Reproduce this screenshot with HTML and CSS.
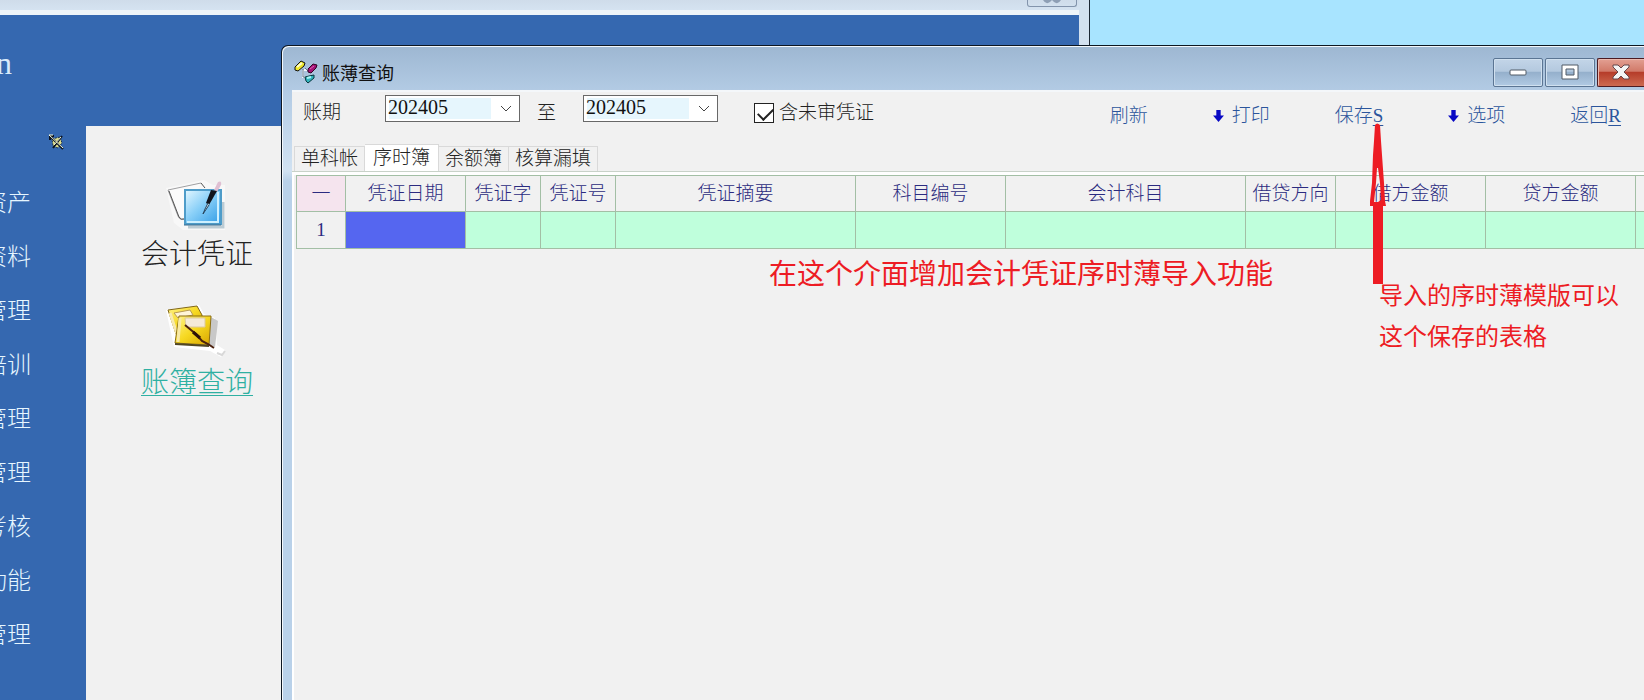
FILE: index.html
```html
<!DOCTYPE html>
<html lang="zh-CN">
<head>
  <meta charset="UTF-8">
  <meta name="viewport" content="width=device-width, initial-scale=1.0">
  <title>账薄查询</title>
  <link rel="stylesheet" href="styles.css">
</head>
<body>
  <div class="desktop">

    <!-- main window -->
    <div class="window main-window">
      <div class="main-title">
        <button class="main-ctl" aria-label="关闭">
          <svg width="20" height="5" viewBox="0 0 20 5"><path d="M1 0Q4 5 8 2L10 0L12 2Q16 5 19 0" fill="#8e9fb5"/></svg>
        </button>
      </div>
      <div class="main-body">
        <header class="banner"><span class="brand">n</span></header>
        <div class="main-content">
          <nav class="side-nav">
            <svg class="pin" width="15" height="15" viewBox="0 0 15 15">
              <path d="M3 4L11 2L13 8L9 13L4 11Z" fill="#dfe08c" stroke="#182c4c" stroke-dasharray="2 1"/>
              <path d="M1 1L14 14M1 1h4M1 1v4M13 1L4 13" stroke="#0c1420" fill="none" stroke-width="2"/>
              <path d="M0 0L14 13M0 0h4M12 2L5 10" stroke="#f4f8d8" fill="none"/>
            </svg>
            <a href="#">资产</a>
            <a href="#">资料</a>
            <a href="#">管理</a>
            <a href="#">培训</a>
            <a href="#">管理</a>
            <a href="#">管理</a>
            <a href="#">考核</a>
            <a href="#">功能</a>
            <a href="#">管理</a>
          </nav>
          <div class="launcher">
            <a href="#" class="launch">
              <svg width="62" height="54" viewBox="0 0 62 54">
                <defs>
                  <linearGradient id="blue" x1="0" y1="0" x2="1" y2="1">
                    <stop offset="0" stop-color="#e4f7ff"/><stop offset=".45" stop-color="#8ad0f8"/><stop offset="1" stop-color="#2f9be6"/>
                  </linearGradient>
                </defs>
                <path d="M0 8L38 0L47 5H59V50H17L8 43Z" fill="#f8f8f8"/>
                <path d="M35 3L2 10L12 36Q14 41 18 39" fill="#fbfbfb" stroke="#a0a0a2"/>
                <path d="M3 11L13 37Q15 40 18 39M35 3L39 8" fill="none" stroke="#555"/>
                <path d="M22 47H57V22" fill="none" stroke="#bccbd3" stroke-width="3"/>
                <rect x="19" y="10" width="36" height="34" fill="url(#blue)" stroke="#4e9cc9" stroke-width="2"/>
                <path d="M21 42H52V12" fill="none" stroke="#cdf0ff" stroke-width="2"/>
                <path d="M18 45H55" stroke="#3a6c8e"/>
                <path d="M48 10L52 2Q56 0 55 5L51 12Z" fill="#dfbfd2"/>
                <path d="M45 10L51 11L43 25L40 23Z" fill="#10141c"/>
                <path d="M42 23L39 29L37 34L43 25" fill="#d8eaf4" stroke="#24435c"/>
              </svg>
              <span>会计凭证</span>
            </a>
            <a href="#" class="launch active">
              <svg width="62" height="54" viewBox="0 3 62 54">
                <defs>
                  <linearGradient id="gold" x1="0" y1="0" x2="1" y2="1">
                    <stop offset="0" stop-color="#fff38b"/><stop offset=".5" stop-color="#f6d820"/><stop offset="1" stop-color="#d8a400"/>
                  </linearGradient>
                </defs>
                <path d="M0 5L33 0L38 9L49 13L51 40L59 45L55 52L44 46L8 42Z" fill="#fff"/>
                <path d="M45 12L52 16L49 42L43 40" fill="#c8c8c8"/>
                <path d="M2 5L31 1L36 10L37 28L10 29Z" fill="url(#gold)" stroke="#806518"/>
                <path d="M8 8L24 5L27 10L12 13Z" fill="#fff5d7" stroke="#b79a54"/>
                <path d="M4 8L11 29" stroke="#f7eab0" stroke-width="3"/>
                <path d="M13 11L45 11L43 40L9 38Z" fill="url(#gold)" stroke="#8b6d13"/>
                <path d="M14 13L12 37" stroke="#f8e9a6" stroke-width="3"/>
                <path d="M19 13H39V22H20Z" fill="#f5ead8" stroke="#ddc99c"/>
                <path d="M9 39L43 41" stroke="#504623" stroke-width="2"/>
                <path d="M19 20L25 25L30 29L36 36L42 39L48 43" fill="none" stroke="#4b210d" stroke-width="2"/>
                <path d="M27 27L34 33" stroke="#2e1208" stroke-width="3"/>
                <path d="M51 48L56 50L59 46" fill="none" stroke="#d8d8d8" stroke-width="2"/>
              </svg>
              <span>账簿查询</span>
            </a>
          </div>
        </div>
      </div>
    </div>

    <!-- ledger query window -->
    <div class="window query-window">
      <div class="title-bar">
        <svg width="24" height="24" viewBox="0 0 24 24">
          <path d="M9 10V17H12M10 10H15" fill="none" stroke="#f2f6fa" stroke-width="2"/>
          <path d="M9 9V17H11M11 8L15 12" fill="none" stroke="#60758c"/>
          <path d="M1 7L7 1L11 3L10 6L4 11L1 10Z" fill="#f0e92a" stroke="#111"/>
          <path d="M3 7L8 3" stroke="#fffccb" stroke-width="2"/>
          <path d="M14 9L19 4L23 5L22 8L17 13L14 12Z" fill="#a31175" stroke="#300323"/>
          <path d="M16 9L20 6" stroke="#df62b5"/>
          <path d="M11 17L15 16L20 15V18L14 23L12 21Z" fill="#31b3bc" stroke="#08363d"/>
          <path d="M13 18L17 17" stroke="#aaf5f4" stroke-width="2"/>
        </svg>
        <h1>账薄查询</h1>
        <div class="controls">
          <button aria-label="最小化">
            <svg width="18" height="18" viewBox="0 0 18 18"><rect x="1" y="7" width="16" height="5" rx="1" fill="#fff" stroke="#515b66"/></svg>
          </button>
          <button aria-label="最大化">
            <svg width="18" height="18" viewBox="0 0 18 18"><path d="M1 2H17V16H1ZM5 6V12H13V6Z" fill="#fff" fill-rule="evenodd" stroke="#515b66"/></svg>
          </button>
          <button class="close" aria-label="关闭">
            <svg width="18" height="16" viewBox="0 0 18 16"><path d="M1 1H6L9 4L12 1H17V3L12 8L17 13V15H12L9 12L6 15H1V13L6 8L1 3Z" fill="#f4f4f4" stroke="#65474b"/></svg>
          </button>
        </div>
      </div>

      <div class="client">
        <div class="toolbar">
          <label for="from">账期</label>
          <div class="combo combo-from">
            <select id="from"><option>202405</option></select>
            <svg width="12" height="8" viewBox="0 0 12 8"><path d="M1 1L6 6L11 1" fill="none" stroke="#444"/></svg>
          </div>
          <label for="to">至</label>
          <div class="combo combo-to">
            <select id="to"><option>202405</option></select>
            <svg width="12" height="8" viewBox="0 0 12 8"><path d="M1 1L6 6L11 1" fill="none" stroke="#444"/></svg>
          </div>
          <label class="check"><input type="checkbox" checked>含未审凭证</label>
          <div class="actions">
            <button>刷新</button>
            <button><svg width="11" height="12" viewBox="0 0 10 11"><path d="M3 0H7V5H10L5 11L0 5H3Z" fill="#0808c4"/></svg>打印</button>
            <button>保存<u>S</u></button>
            <button><svg width="11" height="12" viewBox="0 0 10 11"><path d="M3 0H7V5H10L5 11L0 5H3Z" fill="#0808c4"/></svg>选项</button>
            <button>返回<u>R</u></button>
          </div>
        </div>

        <div class="tabs" role="tablist">
          <button role="tab">单科帐</button>
          <button role="tab" class="selected" aria-selected="true">序时簿</button>
          <button role="tab">余额簿</button>
          <button role="tab">核算漏填</button>
        </div>

        <div class="sheet">
          <table>
            <colgroup>
              <col class="w-index"><col class="w-date"><col class="w-short"><col class="w-short">
              <col class="w-wide"><col class="w-amount"><col class="w-wide"><col class="w-dir">
              <col class="w-amount"><col class="w-amount"><col>
            </colgroup>
            <thead>
              <tr>
                <th class="corner">一</th>
                <th>凭证日期</th>
                <th>凭证字</th>
                <th>凭证号</th>
                <th>凭证摘要</th>
                <th>科目编号</th>
                <th>会计科目</th>
                <th>借贷方向</th>
                <th>借方金额</th>
                <th>贷方金额</th>
                <th></th>
              </tr>
            </thead>
            <tbody>
              <tr>
                <th>1</th>
                <td class="current"></td>
                <td></td><td></td><td></td><td></td><td></td><td></td><td></td><td></td><td></td>
              </tr>
            </tbody>
          </table>
        </div>
      </div>
    </div>

    <!-- notes drawn over the windows -->
    <p class="note note-main">在这个介面增加会计凭证序时薄导入功能</p>
    <svg class="arrow" width="18" height="162" viewBox="0 0 18 162">
      <path fill="#ed1c24" fill-rule="evenodd" d="M6 2Q8 -1 11 2L12 18L13 32L14 46L15 60L16 78L17 83H14V161H4V83H1V78L3 60L4 32L5 18ZM8 45L7 60L5 79L9 79L12 77L11 60L9 45Z"/>
    </svg>
    <p class="note note-side">导入的序时薄模版可以<br>这个保存的表格</p>
  </div>
</body>
</html>
```

FILE: styles.css
```css
* {
  box-sizing: border-box;
}
body {
  margin: 0;
  font-family: "Liberation Serif", "Noto Sans CJK SC", serif;
  font-size: 19px;
  font-weight: 300;
  color: #222;
}
button {
  padding: 0;
  border: none;
  background: none;
  font: inherit;
  color: inherit;
}
a {
  color: inherit;
  text-decoration: none;
}
svg {
  display: block;
  flex: none;
  overflow: visible;
}
.desktop {
  position: relative;
  height: 100vh;
  overflow: hidden;
  background: #a8e4ff;
}
.window {
  position: absolute;
  display: flex;
  flex-direction: column;
  bottom: 0;
}

/* main window */
.main-window {
  left: 0;
  top: 0;
  width: 1090px;
  padding-right: 10px;
  background: #d3e1ef;
  border-right: 1px solid #1c2733;
}
.main-title {
  display: flex;
  justify-content: flex-end;
  height: 15px;
  background: linear-gradient(#cfdcea, #d5e3f1);
  border-bottom: 5px solid #eef4f8;
}
.main-ctl {
  width: 50px;
  height: 7px;
  margin-right: 2px;
  display: flex;
  justify-content: center;
  align-items: flex-start;
  border: 1px solid #8394ac;
  border-top: none;
  border-radius: 0 0 3px 3px;
}
.main-body {
  flex: 1;
  display: flex;
  flex-direction: column;
  background: #3568b0;
}
.banner {
  height: 111px;
  padding-top: 28px;
  color: #d8eafa;
  font-size: 32px;
  line-height: 40px;
}
.brand {
  margin-left: -4px;
}
.main-content {
  flex: 1;
  display: flex;
}
.side-nav {
  width: 86px;
  display: flex;
  flex-direction: column;
  align-items: flex-start;
  color: #e6f6ff;
  font-size: 24px;
  line-height: 54px;
}
.side-nav a {
  width: 31px;
  display: flex;
  justify-content: flex-end;
  white-space: nowrap;
}
.pin {
  margin: 9px 0 26px 49px;
}
.launcher {
  flex: 1;
  display: flex;
  flex-direction: column;
  align-items: flex-start;
  gap: 32px;
  padding: 54px 55px;
  background: #f1f1f1;
  font-size: 28px;
  line-height: 42px;
}
.launch {
  display: flex;
  flex-direction: column;
  align-items: center;
}
.launch.active {
  color: #2fb0a2;
}
.launch.active span {
  text-decoration: underline;
  text-decoration-thickness: 1px;
  text-underline-offset: 3px;
}

/* ledger query window */
.query-window {
  left: 281px;
  right: 0;
  top: 45px;
  padding-left: 10px;
  border: 1px solid #0d1722;
  border-width: 1px 0 0 1px;
  border-radius: 7px 0 0 0;
  background: linear-gradient(#9db7d2, #b3cbe4 45px, #d1e2f2 125px, #b9d1e9 135px);
  box-shadow: inset 1px 1px #f3f8fc;
}
.title-bar {
  display: flex;
  align-items: center;
  height: 44px;
  padding-top: 8px;
  padding-left: 2px;
}
.title-bar h1 {
  margin: 0 0 0 4px;
  font-family: "Noto Sans CJK SC", sans-serif;
  font-size: 18px;
  font-weight: 400;
  color: #111;
}
.controls {
  display: flex;
  gap: 2px;
  margin-left: auto;
}
.controls button {
  width: 50px;
  height: 29px;
  display: flex;
  align-items: center;
  justify-content: center;
  border: 1px solid #5b7593;
  border-radius: 2px;
  background: linear-gradient(#c3d5e8, #b4c9df 45%, #95b0cc 50%, #b1cae3);
  box-shadow: inset 0 0 0 1px #d0e0ef;
}
.controls .close {
  width: 47px;
  border-color: #4c1b22;
  border-right: none;
  border-radius: 2px 0 0 2px;
  background: linear-gradient(#e3a093, #d17a69 45%, #b63d2a 50%, #cd6a50);
  box-shadow: inset 1px 1px #ebb9ae;
}
.client {
  flex: 1;
  display: flex;
  flex-direction: column;
  background: #f1f1f1;
  border-top: 2px solid #f4f7fa;
}
.toolbar {
  display: flex;
  align-items: flex-start;
  height: 36px;
  padding: 3px 0 0 11px;
  line-height: 29px;
}
.toolbar label {
  padding-top: 3px;
}
.combo {
  position: relative;
}
.combo-from {
  margin: 0 17px 0 44px;
}
.combo-to {
  margin: 0 36px 0 27px;
}
.combo select {
  appearance: none;
  display: block;
  width: 135px;
  height: 27px;
  padding: 0 2px 3px;
  border: 1px solid #686868;
  border-radius: 0;
  background: linear-gradient(#e6f6fd, #e6f6fd) 3px 2px / 102px 21px no-repeat #fff;
  font: inherit;
  font-size: 20px;
  line-height: 22px;
  color: #111;
}
.combo svg {
  position: absolute;
  right: 8px;
  top: 10px;
  pointer-events: none;
}
.check {
  display: flex;
  align-items: center;
  gap: 5px;
}
.check input {
  appearance: none;
  width: 20px;
  height: 20px;
  margin: 0;
  border: 1px solid #222;
  background: #fff;
}
.check input:checked::before {
  content: "";
  display: block;
  width: 13px;
  height: 7px;
  margin: 4px 0 0 3px;
  border: solid #222;
  border-width: 0 0 2px 2px;
  transform: rotate(-45deg);
}
.actions {
  display: flex;
  gap: 65px;
  margin-left: auto;
  padding: 6px 23px 0 0;
  color: #2b559c;
}
.actions button {
  display: flex;
  align-items: center;
}
.actions svg {
  margin-right: 8px;
}
.actions u {
  text-decoration-thickness: 1px;
  text-underline-offset: 3px;
}
.tabs {
  display: flex;
  align-items: flex-end;
  height: 44px;
  padding-left: 2px;
  border-bottom: 1px solid #c8d2c8;
}
.tabs button {
  height: 25px;
  padding: 0 6px;
  border: 1px solid #d9d9d9;
  border-width: 1px 1px 0 0;
  line-height: 24px;
}
.tabs button:first-child {
  border-left-width: 1px;
}
.tabs .selected {
  height: 27px;
  padding: 0 8px;
  background: #fff;
}
.sheet {
  flex: 1;
  padding-left: 2px;
  border: solid #fff;
  border-width: 3px 0 0 2px;
}
table {
  width: 100%;
  table-layout: fixed;
  border-collapse: collapse;
  background: #f1f1f1;
  color: #2b2b80;
}
th, td {
  height: 37px;
  padding: 0;
  border: 1px solid #a3bfa5;
  border-right-width: 0;
  font-weight: 300;
  line-height: 28px;
  white-space: nowrap;
}
thead th {
  height: 36px;
}
td {
  background: #bfffdc;
}
.corner {
  background: #f5e4ee;
}
.current {
  background: #5566f0;
}
.w-index {
  width: 49px;
}
.w-date {
  width: 120px;
}
.w-short {
  width: 75px;
}
.w-wide {
  width: 240px;
}
.w-amount {
  width: 150px;
}
.w-dir {
  width: 90px;
}

/* notes */
.note {
  position: absolute;
  margin: 0;
  font-family: "Noto Sans CJK SC", sans-serif;
  font-weight: 400;
  color: #ed1c24;
  white-space: nowrap;
}
.note-main {
  left: 769px;
  top: 252px;
  font-size: 28px;
  line-height: 41px;
}
.note-side {
  left: 1379px;
  top: 273px;
  font-size: 24px;
  line-height: 41px;
}
.arrow {
  position: absolute;
  left: 1369px;
  top: 123px;
}
```
